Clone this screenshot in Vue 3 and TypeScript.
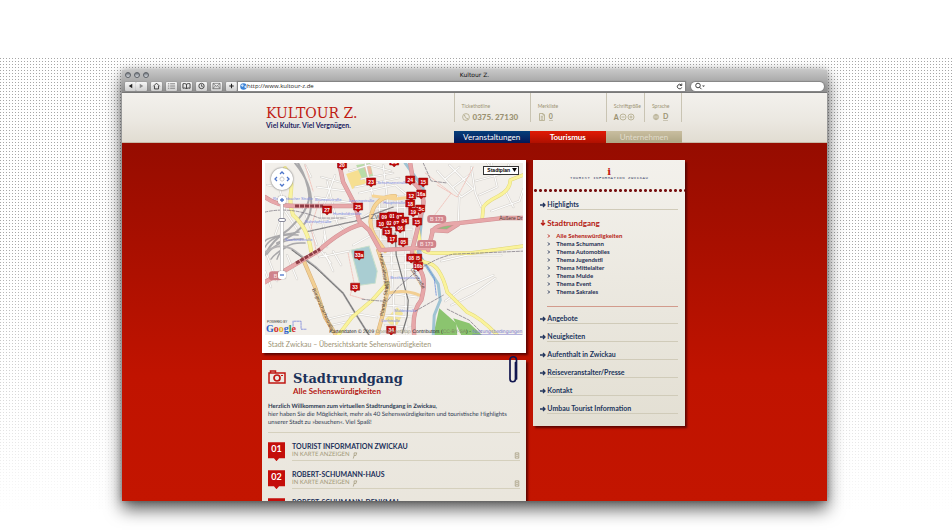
<script setup lang="ts">
import { ref } from 'vue'

interface Marker { label: string; x: number; y: number }
interface Stop { no: string; title: string }

const address = ref('http://www.kultour-z.de')
const query = ref('')
const zoom = ref(78)
const mapType = ref('Stadtplan')

const topics: string[] = [
  'Alle Sehenswürdigkeiten', 'Thema Schumann', 'Thema Automobiles', 'Thema Jugendstil',
  'Thema Mittelalter', 'Thema Mulde', 'Thema Event', 'Thema Sakrales',
]
const links: string[] = [
  'Angebote', 'Neuigkeiten', 'Aufenthalt in Zwickau', 'Reiseveranstalter/Presse',
  'Kontakt', 'Umbau Tourist Information',
]
const stops: Stop[] = [
  { no: '01', title: 'TOURIST INFORMATION ZWICKAU' },
  { no: '02', title: 'ROBERT-SCHUMANN-HAUS' },
  { no: '03', title: 'ROBERT-SCHUMANN-DENKMAL' },
]
const markers: Marker[] = [
  { label: '20', x: 77, y: 2 }, { label: '26', x: 129, y: -1 },
  { label: '23', x: 106, y: 19 }, { label: '27', x: 62, y: 47 }, { label: '25', x: 93, y: 44 },
  { label: '24', x: 145, y: 17 }, { label: '15', x: 158, y: 19 }, { label: '12', x: 146, y: 33 },
  { label: '16a', x: 156, y: 31 }, { label: '18', x: 145, y: 41 }, { label: '15c', x: 155, y: 46 },
  { label: '19', x: 148, y: 49 }, { label: '15', x: 152, y: 59 }, { label: '09', x: 119, y: 54 },
  { label: '01', x: 127, y: 53 }, { label: '07', x: 134, y: 54 }, { label: '04', x: 139, y: 58 },
  { label: '10', x: 116, y: 61 }, { label: '02', x: 124, y: 60 }, { label: '07', x: 131, y: 60 },
  { label: '06', x: 135, y: 65 }, { label: '13', x: 122, y: 69 }, { label: '17', x: 127, y: 76 },
  { label: '05', x: 138, y: 79 }, { label: '33a', x: 94, y: 92 }, { label: '33', x: 90, y: 124 },
  { label: '05', x: 152, y: 95 }, { label: '08', x: 146, y: 95 }, { label: '16b', x: 153, y: 103 },
  { label: '34', x: 126, y: 167 },
]
const streets: string[] = [
  'M70 12L56 50L62 84', 'M78 20L56 14M82 28L52 24', 'M88 40L50 34', 'M52 60L92 52', 'M60 72L56 88L66 100',
  'M62 18L72 60L80 68', 'M94 30L130 22L142 32', 'M84 8L104 2L126 8', 'M100 0L108 34', 'M118 2L122 34',
  'M96 16L128 10', 'M90 24L134 15', 'M107 49L92 58', 'M110 70L88 82', 'M108 46L146 44', 'M106 56L147 55',
  'M109 66L147 66', 'M112 76L146 76', 'M114 36L116 84', 'M122 34L124 84', 'M132 33L133 85', 'M140 32L139 86',
  'M116 92L146 92', 'M118 100L148 100', 'M121 108L150 106', 'M124 130L152 134', 'M122 142L150 144',
  'M120 152L148 154', 'M120 162L147 164', 'M126 88L130 172', 'M140 88L141 172',
  'M172 8L196 34L208 26L184 2', 'M180 16L194 4M188 24L204 12', 'M194 34L193 60',
  'M206 4L210 30L216 44', 'M210 18L240 10L244 0', 'M214 32L232 24L226 0', 'M222 0L230 12L250 6',
  'M226 48L254 38L258 26', 'M240 28L248 44', 'M2 92L12 118', 'M22 92L32 116', 'M0 108L6 124',
  'M60 90L68 108M68 88L76 102M54 94L84 88', 'M62 156L88 150L112 154', 'M66 162L84 158L86 152',
  'M180 138L196 126L228 112', 'M186 142L208 131L230 115', 'M176 98L202 92L236 92',
  'M2 22L14 24L20 44L10 72', 'M20 48L32 66', 'M38 44L52 82', 'M46 14L40 2',
]
</script>

<template>
  <div class="page">
    <section class="browser">
      <header class="chrome">
        <div class="titlebar">
          <span class="lights"><i></i><i></i><i></i></span>
          <span class="title">Kultour Z.</span>
        </div>
        <div class="toolbar">
          <div class="pair">
            <button type="button" aria-label="Zurück"><svg viewBox="0 0 12 9"><path d="M8 2v5L4 4.500z" fill="#222" /></svg></button>
            <button type="button" aria-label="Vor"><svg viewBox="0 0 12 9"><path d="M4 2v5l4-2.500z" fill="#8b8b8b" /></svg></button>
          </div>
          <button type="button" aria-label="Startseite"><svg viewBox="0 0 12 9"><path d="M2.500 4.800L6 1.300l3.500 3.500M3.700 4.500v3.300h4.600V4.500" fill="none" stroke="#333" /></svg></button>
          <button type="button" aria-label="Liste"><svg viewBox="0 0 12 9"><path d="M2 2h1.500m1 0h5.500M2 4.500h1.500m1 0h5.500M2 7h1.500m1 0h5.500" stroke="#777" /></svg></button>
          <button type="button" aria-label="Lesezeichen"><svg viewBox="0 0 12 9"><path d="M6 2.500Q4 1.200 2 2v5q2-.6 4 .3 2-.9 4-.3V2Q8 1.200 6 2.500v5" fill="none" stroke="#333" /></svg></button>
          <button type="button" aria-label="Verlauf"><svg viewBox="0 0 12 9"><circle cx="6" cy="4.500" r="3" fill="none" stroke="#333" /><path d="M6 2.500v2.300h1.600" fill="none" stroke="#333" stroke-width=".8" /></svg></button>
          <button type="button" aria-label="E-Mail"><svg viewBox="0 0 12 9"><path d="M2 1.500h8v6H2zM2 1.700l4 3.200 4-3.200M2 7.300l2.800-3M10 7.300l-2.800-3" fill="none" stroke="#555" stroke-width=".7" /></svg></button>
          <button type="button" aria-label="Hinzufügen"><svg viewBox="0 0 12 9"><path d="M6 2v5M3.500 4.500h5" stroke="#222" stroke-width="1.200" /></svg></button>
          <label class="address">
            <svg viewBox="0 0 8 8"><circle cx="4" cy="4" r="3.700" fill="#3b82d6" /><path d="M1 2.500q2-2 3-.5T2.500 4.500zM5 3.500l2.400-1v3L5.500 6z" fill="#cfe5fb" /></svg>
            <input v-model="address" type="text" aria-label="Adresse">
            <svg viewBox="0 0 8 8"><path d="M6.300 2.600A2.600 2.600 0 1 0 6.600 5M4.300 2.800h2.300V.6" fill="none" stroke="#333" /></svg>
          </label>
          <label class="search">
            <svg viewBox="0 0 12 8"><circle cx="4" cy="3.500" r="2.300" fill="none" stroke="#444" /><path d="M5.500 5.200l2 2" stroke="#444" /><path d="M8 3.500h3L9.500 5z" fill="#444" /></svg>
            <input v-model="query" type="text" aria-label="Suche">
          </label>
        </div>
      </header>

      <div class="masthead">
        <div class="wrap mast-row">
          <a class="logo" href="#"><strong>KULTOUR Z.</strong><span>Viel Kultur. Viel Vergnügen.</span></a>
          <div class="mast-right">
            <div class="meta">
              <div class="cell">
                <small>Tickethotline</small>
                <p>
                  <svg viewBox="0 0 8 8"><circle cx="4" cy="4" r="3.400" /><path d="M2.500 2.200q.2 3 3.200 3.700M2.300 2.200l.8.900M5 5.300l1 .8" /></svg>
                  <b>0375. 27130</b>
                </p>
              </div>
              <div class="cell">
                <small>Merkliste</small>
                <p><svg viewBox="0 0 8 8"><path d="M1.500.5h3.500l1.500 1.500v5.500h-5zM5 .5V2h1.500M2.800 3.300h2.400M2.800 4.800h2.400M2.800 6.200h2.400" /></svg><a href="#">0</a></p>
              </div>
              <div class="cell">
                <small>Schriftgröße</small>
                <p class="tight">
                  <b>A</b>
                  <button type="button" aria-label="Schrift verkleinern"><svg viewBox="0 0 8 8"><circle cx="4" cy="4" r="3" /><path d="M2.500 4h3" /></svg></button>
                  <button type="button" aria-label="Schrift vergrößern"><svg viewBox="0 0 8 8"><circle cx="4" cy="4" r="3" /><path d="M2.500 4h3M4 2.500v3" /></svg></button>
                </p>
              </div>
              <div class="cell last">
                <small>Sprache</small>
                <p><svg class="globe" viewBox="0 0 8 8"><circle cx="4" cy="4" r="2.800" /><path d="M1 4h6M4 1v6M2 2.500h4M2 5.500h4" /><ellipse cx="4" cy="4" rx="1.300" ry="2.800" /></svg><a href="#">D</a></p>
              </div>
            </div>
            <nav class="tabs">
              <a class="blue" href="#">Veranstaltungen</a>
              <a class="red" href="#">Tourismus</a>
              <a class="sand" href="#">Unternehmen</a>
            </nav>
          </div>
        </div>
      </div>

      <main class="content">
        <div class="wrap columns">
          <div class="main-col">
            <figure class="map-card">
              <div class="map">
                <svg class="map-art" viewBox="0 0 258 172" preserveAspectRatio="xMidYMid slice" role="img" aria-label="Karte von Zwickau">
                  <rect width="258" height="172" fill="#f2efea" />
                  <path d="M104 34L118 32L147 32L148 86L116 86L104 62z" fill="#e8e5e1" />
                  <path d="M81 11l15-5 5 14-14 6z" fill="#f6df91" /><path d="M91 2l14-2 3 13-11 3z" fill="#b9dca8" /><path d="M98 3l7-2 2 10-5 1z" fill="#f0b89e" />
                  <path d="M86 87L104 83L112 108L110 120L95 122z" fill="#a9cdd2" stroke="#c9dfca" />
                  <path d="M174 145l17 15 1 12h-24z" fill="#8bc46f" /><path d="M188 155l16 5 13 12h-21z" fill="#8bc46f" /><path d="M120 156l12-12 6 6-8 16z" fill="#f4e69a" />
                  <g fill="none" stroke-linejoin="round" stroke-linecap="round">
                    <path v-for="s in streets" :key="s" :d="s" stroke="#d3cfca" stroke-width="2.200" />
                    <path v-for="s in streets" :key="'w' + s" :d="s" stroke="#fdfdfc" stroke-width="1.200" />
                    <path d="M83 90l6 30-4 12 14 4M52 92l-6-28 8-26M160 10l26 20-18 24M40 2l8 26M208 4l-16 30-20-12" stroke="#f0b6ae" stroke-width=".7" stroke-dasharray="2 1" />
                    <path d="M140 0L158 25L157 50L153 90L173 121L175 137L169 152L168 172" stroke="#9fc3d3" stroke-width="3" />
                    <path d="M154 60L156 94L169 115L171 132" stroke="#6389da" stroke-width=".8" stroke-dasharray="2 1" />
                    <path d="M33 0Q43 18 44 32T24 66Q6 78 0 92M30 0Q48 22 46 44T12 80" stroke="#aaa9ab" stroke-width="2" />
                    <path d="M33 72Q8 70 0 84M38 76Q14 75 2 91M22 84Q12 88 6 96M34 69Q2 74 0 78M40 80Q18 78 12 96" stroke="#a9a8aa" stroke-width="1.500" />
                    <path d="M0 89Q16 78 30 88L52 105L78 130L92 153L104 172" stroke="#b5b3b4" stroke-width="2" /><path d="M27 87L50 104L78 130L92 153L104 172" stroke="#777" stroke-width="1" stroke-dasharray="3 1" />
                    <path d="M40 69L90 58L128 44" stroke="#8d8b8d" stroke-width="1.300" stroke-dasharray="4 1" />
                    <path d="M130 70L131 92L143 137L142 153L137 170" stroke="#777" stroke-width="1.200" />
                    <path d="M20 5Q28 16 26 28T28 52Q43 65 46 88" stroke="#e3da7f" stroke-width="4" /><path d="M20 5Q28 16 26 28T28 52Q43 65 46 88" stroke="#f9f3a1" stroke-width="3" />
                    <path d="M130 33Q114 33 108 46T109 72L120 88" stroke="#dfb677" stroke-width="4" /><path d="M130 33Q114 33 108 46T109 72L120 88M108 33L130 36L147 34" stroke="#f7d595" stroke-width="3" />
                    <path d="M38 96L50 124L60 154L71 172M113 87L120 107L123 124L118 150L112 172" stroke="#d5ad77" stroke-width="4" /><path d="M38 96L50 124L60 154L71 172M113 87L120 107L123 124L118 150L112 172M122 130Q140 126 154 132" stroke="#f2cf93" stroke-width="3" />
                    <path d="M217 55L218 44Q221 39 233 33T245 17L258 12M153 67L155 82Q157 90 168 90H205L258 83M148 85Q151 98 163 100T182 129L202 149Q216 155 232 172M122 120L107 137L87 154L73 172" stroke="#ded477" stroke-width="3.600" />
                    <path d="M217 55L218 44Q221 39 233 33T245 17L258 12M153 67L155 82Q157 90 168 90H205L258 83M148 85Q151 98 163 100T182 129L202 149Q216 155 232 172M122 120L107 137L87 154L73 172" stroke="#faf39b" stroke-width="2.800" />
                    <path d="M169 68l8-7 14 1-7 5z" fill="#8fbd7e" stroke="none" />
                    <path d="M0 34Q12 43 30 43H93M74 0L78 19L90 42L94 58L104 67L115 87L150 85M97 61Q77 66 53 88L0 119M163 87L167 70Q167 61 193 60L237 55H258M167 67L182 68L193 61M150 85H163M145 0L148 19Q160 30 158 42L153 63L147 87Q146 97 154 106T156 137Q146 149 149 172" stroke="#cf9093" stroke-width="4.400" />
                    <path d="M0 34Q12 43 30 43H93M74 0L78 19L90 42L94 58L104 67L115 87L150 85M97 61Q77 66 53 88L0 119M163 87L167 70Q167 61 193 60L237 55H258M167 67L182 68L193 61M150 85H163M145 0L148 19Q160 30 158 42L153 63L147 87Q146 97 154 106T156 137Q146 149 149 172" stroke="#e7a7a9" stroke-width="3.400" />
                    <path d="M30 43H58M31 100L55 86" stroke="#8f3e47" stroke-width="3" stroke-linecap="butt" stroke-dasharray="4 1" />
                    <path d="M0 49Q26 43 54 55H80M97 136Q114 138 122 138L133 124 148 111Q166 96 188 91L258 88M158 0L166 18 182 20M150 148L178 132M182 146L204 157 216 169" stroke="#77717d" stroke-width=".7" stroke-dasharray="3 1.500" />
                    <path d="M28 163V158h8v8h6" stroke="#7c87db" stroke-width=".8" stroke-dasharray="2 1" />
                  </g>
                  <g class="badge"><rect x="162" y="52" width="19" height="8" rx="3" /><text x="171.500" y="58">B 173</text><rect x="152" y="77" width="19" height="8" rx="3" /><text x="161.500" y="83">B 173</text><rect x="4" y="108" width="13" height="9" rx="3" /><text x="10.500" y="115">B</text></g>
                  <g class="places">
                    <text x="8" y="37">Reichenbacher Straße</text><text x="50" y="38">Brunnenstraße</text><text x="40" y="60">Bahnhofstraße</text><text x="68" y="52">Humboldtstraße</text><text x="20" y="78">Saarlandstraße</text><text x="84" y="39">Lessingstraße</text><text x="112" y="21">Schumannstraße</text><text x="118" y="41">Hauptstraße</text><text x="125" y="116">Breithauptstraße</text><text x="129" y="149">Muldestraße</text><text x="116" y="159">Dorfstraße</text>
                  </g>
                  <text x="105" y="56" class="city">Zwi</text>
                  <text x="257" y="57" class="road end">Äußere Dr</text>
                  <text transform="translate(47 126)rotate(66)" class="road">Bürgerschachtstraße</text>
                  <text transform="translate(114 91)rotate(80)" class="road">Humboldtstraße</text>
                  <text transform="translate(118 153)rotate(-80)" class="road">Planitzer Straße</text>
                  <text transform="translate(145 106)rotate(58)" class="road">Uferstraße</text>
                  <g v-for="(m, i) in markers" :key="i" :transform="`translate(${m.x} ${m.y})`" class="marker">
                    <path d="M-4.500-4H4.500V3H2L0 5-2 3H-4.500z" /><text y="1.500">{{ m.label }}</text>
                  </g>
                  <g class="google">
                    <text x="2" y="160" class="powered">POWERED BY</text>
                    <text x="1" y="169"><tspan fill="#2f62c9">G</tspan><tspan fill="#d32f2f">o</tspan><tspan fill="#e5b21b">o</tspan><tspan fill="#2f62c9">g</tspan><tspan fill="#3c9a43">l</tspan><tspan fill="#d32f2f">e</tspan></text>
                  </g>
                  <text x="257" y="170" class="credit">Kartendaten © 2009 <tspan fill="#99977c">OpenStreetMap</tspan> Contributors (<tspan fill="#7f8a64">CC-BY-SA</tspan>) - <tspan fill="#7777cc" text-decoration="underline">Nutzungsbedingungen</tspan></text>
                </svg>
                <div class="pan">
                  <button type="button" class="n" aria-label="Nach oben"><svg viewBox="0 0 6 6"><path d="M1 4l2-2 2 2" /></svg></button>
                  <button type="button" class="w" aria-label="Nach links"><svg viewBox="0 0 6 6"><path d="M4 1L2 3l2 2" /></svg></button>
                  <svg class="hand" viewBox="0 0 6 6"><path d="M1 3.500V2h1V1h2v1h1v2L4 5H2z" /></svg>
                  <button type="button" class="e" aria-label="Nach rechts"><svg viewBox="0 0 6 6"><path d="M2 1l2 2-2 2" /></svg></button>
                  <button type="button" class="s" aria-label="Nach unten"><svg viewBox="0 0 6 6"><path d="M1 2l2 2 2-2" /></svg></button>
                </div>
                <div class="zoom">
                  <button type="button" aria-label="Vergrößern"><svg viewBox="0 0 6 6"><path d="M1 3h4M3 1v4" /></svg></button>
                  <input v-model="zoom" type="range" min="0" max="100" aria-label="Zoomstufe">
                  <button type="button" aria-label="Verkleinern"><svg viewBox="0 0 6 6"><path d="M1 3h4" /></svg></button>
                </div>
                <div class="map-type">
                  <select v-model="mapType" aria-label="Kartentyp"><option>Stadtplan</option></select>
                  <svg viewBox="0 0 6 5"><path d="M0 0h6L3 5z" /></svg>
                </div>
              </div>
              <figcaption>Stadt Zwickau – Übersichtskarte Sehenswürdigkeiten</figcaption>
            </figure>

            <article class="tour">
              <svg class="clip" viewBox="0 0 10 30"><path d="M7.500 7.500V24a2.700 2.700 0 0 1-5.500 0V5a3.200 3.200 0 0 1 6.500 0v19" fill="none" stroke="#11164f" stroke-width="1.700" stroke-linecap="round" /></svg>
              <header class="tour-head">
                <svg viewBox="0 0 18 14"><path d="M1 3h16v10H1zM2.500 1h5v2h-5z" fill="none" stroke="#c01712" stroke-width="1.500" /><circle cx="9" cy="8" r="3" fill="none" stroke="#c01712" stroke-width="1.700" /><path d="M13 5.500h2" stroke="#c01712" /></svg>
                <div><h1>Stadtrundgang</h1><h2>Alle Sehenswürdigkeiten</h2></div>
              </header>
              <p class="intro"><strong>Herzlich Willkommen zum virtuellen Stadtrundgang in Zwickau,</strong><br>hier haben Sie die Möglichkeit, mehr als 40 Sehenswürdigkeiten und touristische Highlights unserer Stadt zu »besuchen«. Viel Spaß!</p>
              <ol class="stops">
                <li v-for="s in stops" :key="s.no">
                  <span class="flag">{{ s.no }}</span>
                  <div class="stop">
                    <h3>{{ s.title }}</h3>
                    <div class="stop-row">
                      <a href="#">IN KARTE ANZEIGEN <svg viewBox="0 0 6 8"><path d="M2 1h3L4 4H2zM2 4L1 7.500" /></svg></a>
                      <svg viewBox="0 0 6 8"><path d="M1 1h4v6H1zM2 3h2M2 5h2" /></svg>
                    </div>
                  </div>
                </li>
              </ol>
            </article>
          </div>

          <aside class="side">
            <div class="info-head"><b>i</b><span>TOURIST INFORMATION ZWICKAU</span></div>
            <nav class="side-nav">
              <a class="item" href="#"><svg viewBox="0 0 6 6"><path d="M0 3h5M3 1l2 2-2 2" /></svg><span>Highlights</span></a>
              <a class="item open" href="#"><svg viewBox="0 0 6 6"><path d="M3 0v5M1 3l2 2 2-2" /></svg><span>Stadtrundgang</span></a>
              <ul>
                <li v-for="(t, i) in topics" :key="t"><a href="#" :class="{ current: i === 0 }"><svg viewBox="0 0 4 4"><path d="M1 .5l1.500 1.500L1 3.500" /></svg>{{ t }}</a></li>
              </ul>
              <a v-for="l in links" :key="l" class="item" href="#"><svg viewBox="0 0 6 6"><path d="M0 3h5M3 1l2 2-2 2" /></svg><span>{{ l }}</span></a>
            </nav>
          </aside>
        </div>
      </main>
    </section>
  </div>
</template>

<style>
body { margin: 0; background: #fff; }
</style>

<style scoped>
* { box-sizing: border-box; }
.page {
  height: 100vh; padding: 70px 125px 29px 122px; overflow: hidden;
  font-family: Lato, "Open Sans", sans-serif; color: #1c2c50;
  background:
    linear-gradient(#fff 58px, transparent 58px, transparent 45%, #fff 97%),
    linear-gradient(90deg, transparent 1px, #fff 1px) 0 0 / 3px 3px,
    linear-gradient(#a6a6a6 1px, #fff 1px) 0 1px / 3px 3px;
}
a { color: inherit; text-decoration: none; }
button { display: grid; place-items: center; border: 0; padding: 0; background: none; }
p, h1, h2, h3, figure, ol, ul { margin: 0; padding: 0; list-style: none; }
svg { display: block; flex: none; }
.browser { height: 100%; display: flex; flex-direction: column; overflow: hidden; box-shadow: 0 8px 16px rgba(0, 0, 0, .65), 0 0 6px rgba(0, 0, 0, .3); }

.chrome { flex: none; height: 23px; background: linear-gradient(#c6c6c6, #8e8e8e); border-bottom: 1px solid #777; }
.titlebar { position: relative; height: 10px; display: flex; align-items: center; justify-content: center; }
.title { font: 6px/10px "DejaVu Sans", sans-serif; color: #111; }
.lights { position: absolute; left: 3px; top: 2px; display: flex; gap: 3px; }
.lights i { width: 6px; height: 6px; border: 1px solid #5c6066; border-radius: 50%; background: linear-gradient(#70757c, #dde1e6); }
.toolbar { display: flex; align-items: center; gap: 4px; height: 12px; padding: 0 3px; }
.toolbar button { width: 11px; height: 9px; border-radius: 1px; background: linear-gradient(#f7f7f7, #cfcfcf); box-shadow: 0 0 1px #555; }
.toolbar button svg { width: 11px; height: 8px; }
.pair { display: flex; }
.address, .search { display: flex; align-items: center; height: 9px; background: #fff; box-shadow: 0 0 1px 1px #858585; }
.address { flex: 448; margin-left: -3px; padding: 0 2px; }
.address svg { width: 7px; height: 7px; }
.search { flex: 131; margin-left: 2px; padding-left: 3px; border-radius: 5px; }
.search svg { width: 12px; height: 8px; }
.address input, .search input { flex: 1; min-width: 0; height: 9px; border: 0; padding: 0; background: none; font: 6px/9px "Open Sans", sans-serif; color: #222; outline: 0; }

.wrap { margin: 0 142px 0 140px; }
.masthead { flex: none; height: 50px; background: linear-gradient(#f3f1ed, #ebe8e1 55%, #e1dcd1); box-shadow: inset 0 -1px #c8b9a7; }
.mast-row { display: flex; justify-content: space-between; height: 100%; }
.logo { padding: 12px 0 0 4px; }
.logo strong { display: block; font: 14px/16px "DejaVu Serif", serif; color: #bf1b13; white-space: nowrap; }
.logo span { display: block; font-size: 7px; line-height: 8px; font-weight: 700; color: #22235f; }
.mast-right { width: 54%; margin-right: 3px; display: flex; flex-direction: column; justify-content: space-between; color: #9b9272; }
.meta { display: grid; grid-template-columns: 2fr 2fr 1fr 1fr; height: 27px; }
.cell { min-width: 0; padding: 10px 0 0 7px; border-left: 1px solid #c9c4b3; }
.cell.last { border-right: 1px solid #c9c4b3; }
.cell small { display: block; font-size: 5px; line-height: 6px; white-space: nowrap; }
.cell p { display: flex; align-items: center; gap: 3px; height: 11px; margin-top: 2px; font-size: 8px; line-height: 8px; font-weight: 700; white-space: nowrap; }
.cell p.tight { gap: 0; font-size: 7px; }
.cell a { border-bottom: 1px solid #c9c4b3; font-size: 7px; }
.cell svg { width: 8px; height: 8px; fill: none; stroke: #b0a888; stroke-width: .8; }
.cell .globe { stroke-width: .5; }
.tabs { display: grid; grid-template-columns: repeat(3, 1fr); text-align: center; font-size: 8px; line-height: 12px; color: #fff; }
.blue { background: linear-gradient(#063f7b, #051857); }
.red { background: linear-gradient(#e11a05, #af1000); font-weight: 700; }
.sand { background: linear-gradient(#c9bea0, #afa684); color: #e1dccc; }

.content { flex: 1; min-height: 0; padding-top: 17px; background: linear-gradient(#960c00, #c01300 65%, #c31500); }
.columns { display: grid; grid-template-columns: 265fr 152fr; gap: 7px; align-items: start; }
.main-col { display: grid; gap: 7px; }
.map-card { padding: 3px 3px 0; background: #fff; box-shadow: 2px 2px 2px rgba(70, 0, 0, .8); }
.map { position: relative; overflow: hidden; }
.map-art { width: 100%; }
figcaption { padding: 0 3px; font-size: 7px; line-height: 18px; color: #9c9375; }
.marker path { fill: #c20b0b; stroke: #860000; stroke-width: .5; }
.marker text { font: bold 5px "Liberation Sans", sans-serif; fill: #fff; text-anchor: middle; }
.badge rect { fill: #cf838b; }
.badge text { font: bold 5px "Liberation Sans", sans-serif; fill: #f7d9da; text-anchor: middle; }
.places { font: 4px "Liberation Sans", sans-serif; fill: #7c8ae2; }
.road { font: 5px "Liberation Sans", sans-serif; fill: #4f3a35; }
.road.end { text-anchor: end; }
.city { font: 8px "Liberation Sans", sans-serif; fill: #777; }
.google { font: bold 10px "Liberation Serif", serif; }
.powered { font: 3px "Liberation Sans", sans-serif; fill: #333; }
.credit { font: 5px "Liberation Sans", sans-serif; fill: #222; text-anchor: end; text-rendering: geometricPrecision; }
.pan { position: absolute; left: 6px; top: 5px; display: grid; grid-template: repeat(3, 6px) / repeat(3, 6px); padding: 2px; border-radius: 50%; background: #fff; box-shadow: 0 0 2px #555; grid-template-areas: ". n ." "w h e" ". s ."; }
.n { grid-area: n; }
.w { grid-area: w; }
.e { grid-area: e; }
.s { grid-area: s; }
.hand { grid-area: h; }
.pan svg, .zoom svg { width: 6px; height: 6px; fill: none; stroke: #4c74c9; stroke-width: 1.300; }
.pan .hand { stroke: #aaa; stroke-width: .5; }
.zoom { position: absolute; left: 13px; top: 33px; display: grid; justify-items: center; }
.zoom button { width: 8px; height: 8px; border-radius: 2px; background: #fff; box-shadow: 0 0 1px #555; }
.zoom input { appearance: none; writing-mode: vertical-lr; direction: rtl; width: 8px; height: 67px; margin: 0; background: linear-gradient(90deg, transparent 2px, #aaa 2px, #fff 3px, #fff 5px, #aaa 5px, transparent 6px); }
.zoom input::-webkit-slider-thumb { appearance: none; width: 8px; height: 4px; border: 1px solid #889; border-radius: 2px; background: #fff; }
.map-type { position: absolute; right: 4px; top: 3px; }
.map-type select { display: block; appearance: none; width: 36px; height: 9px; padding: 0 3px; border: 1px solid #333; border-radius: 0; background: #fff; font: bold 5px/7px "Liberation Sans", sans-serif; color: #000; }
.map-type svg { position: absolute; right: 2px; top: 2px; width: 5px; height: 4px; pointer-events: none; }

.tour { position: relative; padding: 11px 6px 0; background: linear-gradient(#eeebe5, #e9e5db); box-shadow: 2px 2px 2px rgba(70, 0, 0, .8); }
.clip { position: absolute; right: 8px; top: -5px; width: 10px; height: 30px; }
.tour-head { display: flex; gap: 7px; }
.tour-head svg { width: 18px; height: 14px; margin-top: -1px; }
h1 { font: bold 13px/16px "DejaVu Serif", serif; color: #1b3159; }
h2 { font-size: 8px; line-height: 8px; font-weight: 700; color: #b51a13; }
.intro { padding: 8px 0 5px; border-bottom: 1px solid #d5d0bd; font-size: 6px; line-height: 8px; color: #2c3951; text-rendering: geometricPrecision; }
.stops { padding-top: 9px; }
.stops li { display: flex; gap: 7px; height: 28px; }
.flag { width: 17px; height: 19px; background: #c40e0a; clip-path: polygon(0 0, 100% 0, 100% 84%, 65% 84%, 50% 100%, 35% 84%, 0 84%); color: #fff; font-size: 9px; line-height: 14px; font-weight: 700; text-align: center; }
.stop { flex: 1; }
h3 { font-size: 7px; line-height: 8px; font-weight: 700; color: #1c315a; }
.stop-row { display: flex; justify-content: space-between; align-items: center; height: 11px; border-bottom: 1px solid #d5d0bd; font-size: 6px; line-height: 6px; color: #a39a79; text-rendering: geometricPrecision; }
.stop-row a { display: flex; gap: 2px; }
.stop-row svg { width: 6px; height: 7px; fill: none; stroke: #9d9474; stroke-width: .8; }

.side { background: linear-gradient(#f3f1ec, #e3dfd3); box-shadow: 2px 2px 2px rgba(70, 0, 0, .8); }
.info-head { display: grid; justify-items: center; align-content: start; height: 33px; padding-top: 7px; background: radial-gradient(circle, #761010 1px, transparent 2px) 0 100% / 5px 5px repeat-x; }
.info-head b { font: bold 10px/9px "DejaVu Serif", serif; color: #c3170f; }
.info-head span { font: 4px/5px "Liberation Mono", monospace; letter-spacing: .5px; color: #394368; white-space: nowrap; }
.side-nav { padding: 3px 7px 8px; }
.item { display: grid; grid-template-columns: 6px 1fr; gap: 1px; align-items: center; height: 18px; font-size: 7px; line-height: 9px; font-weight: 700; color: #22355c; }
.item span { border-bottom: 1px solid #d0cbb9; }
.item svg, li svg { fill: none; stroke: currentColor; }
.item > svg { width: 6px; height: 6px; stroke-width: 1.300; }
.item.open { font-size: 8px; color: #b51a13; }
.item.open span { border-bottom: 0; }
.side-nav ul { margin: 0 0 3px 7px; padding: 0 0 10px; border-bottom: 1px solid #d29b8c; }
.side-nav li a { display: flex; align-items: center; gap: 5px; font-size: 6px; line-height: 8px; font-weight: 700; }
.side-nav li svg { width: 4px; height: 4px; }
.side-nav .current { color: #b51a13; }
</style>
